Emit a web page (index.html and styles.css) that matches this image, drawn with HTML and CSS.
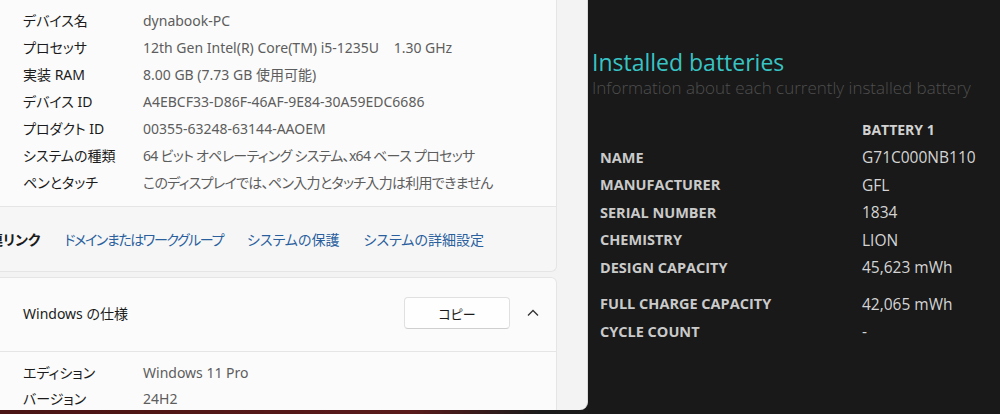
FILE: index.html
```html
<!DOCTYPE html>
<html lang="ja">
<head>
    <meta charset="UTF-8">
    <meta name="viewport" content="width=device-width, initial-scale=1.0">
    <title>システム情報とバッテリー</title>
    <link rel="stylesheet" href="styles.css">
</head>
<body>
    <div class="screen">
        <div class="left-col">
            <div class="settings-window">
                <div class="card spec-card">
                    <div class="spec-grid">
                        <span class="label">デバイス名</span><span class="value">dynabook-PC</span>
                        <span class="label">プロセッサ</span><span class="value">12th Gen Intel(R) Core(TM) i5-1235U&nbsp;&nbsp;&nbsp;&nbsp;1.30 GHz</span>
                        <span class="label">実装 RAM</span><span class="value">8.00 GB (7.73 GB 使用可能)</span>
                        <span class="label">デバイス ID</span><span class="value">A4EBCF33-D86F-46AF-9E84-30A59EDC6686</span>
                        <span class="label">プロダクト ID</span><span class="value">00355-63248-63144-AAOEM</span>
                        <span class="label">システムの種類</span><span class="value tight">64 ビット オペレーティング システム、x64 ベース プロセッサ</span>
                        <span class="label">ペンとタッチ</span><span class="value tight">このディスプレイでは、ペン入力とタッチ入力は利用できません</span>
                    </div>
                </div>
                <div class="card links-card">
                    <span class="links-title">関連リンク</span>
                    <a class="link link-narrow" href="#">ドメインまたはワークグループ</a>
                    <a class="link" href="#">システムの保護</a>
                    <a class="link" href="#">システムの詳細設定</a>
                </div>
                <div class="card win-card">
                    <div class="win-header">
                        <span class="win-title">Windows の仕様</span>
                        <button class="copy-btn">コピー</button>
                        <svg class="chevron" width="12" height="8" viewBox="0 0 12 8">
                            <path d="M1 6.5 L6 1.5 L11 6.5" fill="none" stroke="#333" stroke-width="1.3"/>
                        </svg>
                    </div>
                    <div class="spec-grid win-grid">
                        <span class="label">エディション</span><span class="value">Windows 11 Pro</span>
                        <span class="label">バージョン</span><span class="value">24H2</span>
                    </div>
                </div>
            </div>
            <div class="wallpaper-strip"></div>
        </div>

        <div class="battery-report">
            <h1 class="report-title">Installed batteries</h1>
            <p class="report-sub">Information about each currently installed battery</p>
            <table class="battery-table">
                <tr class="head-row"><td></td><td>BATTERY 1</td></tr>
                <tr><td class="b-label">NAME</td><td class="b-value">G71C000NB110</td></tr>
                <tr><td class="b-label">MANUFACTURER</td><td class="b-value">GFL</td></tr>
                <tr><td class="b-label">SERIAL NUMBER</td><td class="b-value">1834</td></tr>
                <tr><td class="b-label">CHEMISTRY</td><td class="b-value">LION</td></tr>
                <tr><td class="b-label">DESIGN CAPACITY</td><td class="b-value">45,623 mWh</td></tr>
                <tr class="spacer-row"><td colspan="2"></td></tr>
                <tr><td class="b-label">FULL CHARGE CAPACITY</td><td class="b-value">42,065 mWh</td></tr>
                <tr><td class="b-label">CYCLE COUNT</td><td class="b-value">-</td></tr>
            </table>
        </div>
    </div>
</body>
</html>
```

FILE: styles.css
```css
* {
    margin: 0;
    padding: 0;
    box-sizing: border-box;
}

body {
    width: 1000px;
    height: 414px;
    overflow: hidden;
    background-color: #191919;
    font-family: "Noto Sans", "Noto Sans CJK JP", sans-serif;
}

.screen {
    display: flex;
    height: 414px;
}

.left-col {
    width: 588px;
    display: flex;
    flex-direction: column;
}

.settings-window {
    height: 410px;
    background-color: #f3f3f3;
    border-bottom-right-radius: 8px;
    border-right: 1px solid #dadada;
    overflow: hidden;
    padding-right: 30px;
    font-feature-settings: "palt";
}

.wallpaper-strip {
    height: 4px;
    background: linear-gradient(to right, #4a1414, #5a1a1a 70%, #1a1a1a 92%);
}

.card {
    background-color: #fbfbfb;
    border: 1px solid #e5e5e5;
    border-left: none;
}

.spec-card {
    border-top: none;
    padding: 7px 0 11px 23px;
}

.spec-grid {
    display: grid;
    grid-template-columns: 120px 1fr;
    grid-auto-rows: 26.9px;
    align-items: center;
    font-size: 14px;
    white-space: nowrap;
}

.label {
    color: #1b1b1b;
}

.value {
    color: #5d5d5d;
}

/* long japanese lines run narrower in the original UI font */
.value.tight {
    letter-spacing: -0.7px;
}

.links-card {
    height: 65px;
    background-color: #f6f6f6;
    border-top: none;
    display: flex;
    align-items: center;
    gap: 24px;
    font-size: 14px;
    white-space: nowrap;
    border-radius: 0 0 6px 0;
}

.links-title {
    font-weight: bold;
    color: #1b1b1b;
    margin-left: -25px;
}

.link {
    color: #2a5f9e;
    text-decoration: none;
}

.link-narrow {
    letter-spacing: -1.4px;
}

.win-card {
    margin-top: 5px;
    border-radius: 0 6px 0 0;
}

.win-header {
    height: 74px;
    display: flex;
    align-items: center;
    padding: 0 0 3px 23px;
    border-bottom: 1px solid #e5e5e5;
}

.win-title {
    font-size: 14px;
    color: #1b1b1b;
    flex: 1;
}

.copy-btn {
    width: 106px;
    height: 32px;
    background-color: #fefefe;
    border: 1px solid #e0e0e0;
    border-bottom-color: #cfcfcf;
    border-radius: 4px;
    font-family: "Noto Sans CJK JP", sans-serif;
    font-feature-settings: "palt";
    font-size: 13px;
    color: #1b1b1b;
}

.chevron {
    margin: 0 17px 0 17px;
}

.win-grid {
    padding: 7px 0 0 23px;
    grid-auto-rows: 26px;
}

.battery-report {
    flex: 1;
    padding: 47px 0 0 4px;
    color: #cccccc;
    font-family: "Open Sans", "Noto Sans", sans-serif;
}

.report-title {
    font-size: 23px;
    font-weight: normal;
    color: #38c4c4;
    line-height: 30px;
}

.report-sub {
    font-size: 17px;
    font-weight: 300;
    color: #4e4e4e;
    line-height: 22px;
    white-space: nowrap;
}

.battery-table {
    margin: 17px 0 0 8px;
    border-collapse: collapse;
}

.battery-table td {
    height: 27.5px;
    padding: 0;
    white-space: nowrap;
}

.head-row td {
    font-size: 14px;
    font-weight: bold;
    color: #d2d2d2;
}

.b-label {
    width: 262px;
    font-size: 14.5px;
    font-weight: bold;
    color: #cacaca;
}

.b-value {
    font-size: 15.5px;
    color: #d4d4d4;
}

.battery-table .spacer-row td {
    height: 9px;
}
```
